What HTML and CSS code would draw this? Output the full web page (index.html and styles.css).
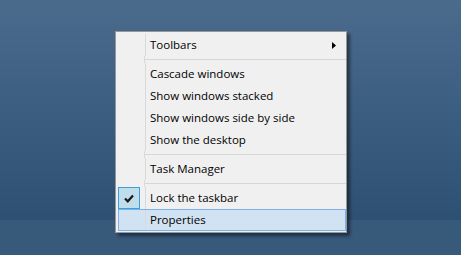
FILE: index.html
```html
<!DOCTYPE html>
<html>
<head>
<meta charset="utf-8">
<link rel="stylesheet" href="styles.css">
</head>
<body>
<div class="desktop"></div>
<div class="taskbar"></div>
<div class="menu">
  <div class="item">
    <span class="gutter"></span><span class="label">Toolbars</span>
    <svg class="arrow" width="4" height="7" viewBox="0 0 4 7"><polygon points="0,0 4,3.5 0,7" fill="#000"/></svg>
  </div>
  <div class="sep"><span class="gutter"></span><span class="line"></span></div>
  <div class="item"><span class="gutter"></span><span class="label">Cascade windows</span></div>
  <div class="item"><span class="gutter"></span><span class="label">Show windows stacked</span></div>
  <div class="item"><span class="gutter"></span><span class="label">Show windows side by side</span></div>
  <div class="item"><span class="gutter"></span><span class="label">Show the desktop</span></div>
  <div class="sep"><span class="gutter"></span><span class="line"></span></div>
  <div class="item"><span class="gutter"></span><span class="label">Task Manager</span></div>
  <div class="sep sep-wide"><span class="gutter"></span><span class="line"></span></div>
  <div class="item">
    <span class="gutter"><span class="check"><svg width="10" height="9" viewBox="0 0 10 9"><path d="M1 4.5 L3.8 7.3 L9 1.5" fill="none" stroke="#1a1a1a" stroke-width="2.2"/></svg></span></span><span class="label">Lock the taskbar</span>
  </div>
  <div class="item active"><span class="gutter"></span><span class="label">Properties</span></div>
</div>
</body>
</html>
```
FILE: styles.css
```css
html, body {
  margin: 0;
  padding: 0;
}
body {
  width: 461px;
  height: 255px;
  overflow: hidden;
  display: flex;
  flex-direction: column;
  position: relative;
  font-family: "Open Sans", "Noto Sans", sans-serif;
  font-size: 11.5px;
  color: #000;
}
.desktop {
  flex: 1;
  background: linear-gradient(180deg, #4b6b8d 0%, #3d5f81 45%, #2e5072 100%);
}
.taskbar {
  height: 35px;
  background: #37597a;
}
.menu {
  position: absolute;
  left: 115px;
  top: 31px;
  width: 232px;
  box-sizing: border-box;
  background: #f0f0f0;
  border: 1px solid #979797;
  padding: 2px 0 1px 2px;
  box-shadow: 3px 3px 3px rgba(0, 0, 0, 0.45);
}
.item {
  display: flex;
  align-items: center;
  height: 22px;
  box-sizing: border-box;
}
.gutter {
  width: 27px;
  height: 100%;
  flex: none;
  border-right: 1px solid #d9d9d9;
  display: flex;
  align-items: center;
}
.label {
  flex: 1;
  padding-left: 4px;
  white-space: nowrap;
  line-height: 22px;
}
.arrow {
  margin-right: 10px;
  flex: none;
}
.sep {
  display: flex;
  height: 7px;
}
.sep-wide {
  height: 7px;
}
.sep .gutter {
  width: 26px;
}
.sep .line {
  flex: 1;
  height: 1px;
  margin-top: 3px;
  background: #d7d7d7;
}
.check {
  width: 22px;
  height: 22px;
  box-sizing: border-box;
  border: 1px solid #3c9fd9;
  background: #c0ddec;
  display: flex;
  align-items: center;
  justify-content: center;
}
.active {
  background: #d1e2f2;
  border: 1px solid #7db1e8;
}
.active .gutter {
  width: 26px;
}
.active .label {
  padding-left: 4px;
}
```
